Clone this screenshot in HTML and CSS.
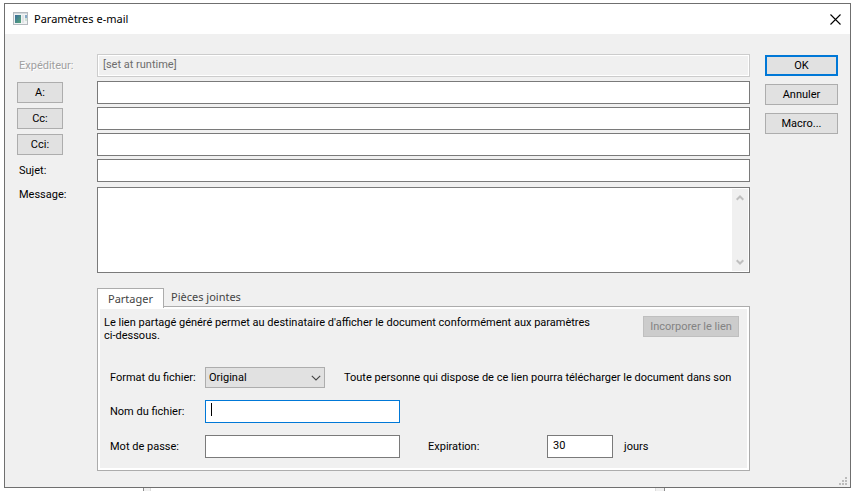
FILE: index.html
```html
<!DOCTYPE html>
<html lang="fr">
<head>
<meta charset="utf-8">
<title>Paramètres e-mail</title>
<link rel="stylesheet" href="styles.css">
</head>
<body>
<main class="dialog">
  <header class="titlebar">
    <svg class="app-icon" width="15" height="14" viewBox="0 0 15 14" aria-hidden="true">
      <defs><linearGradient id="pane" x1="0" y1="0" x2="1" y2="1"><stop offset="0" stop-color="#3a6c9c"/><stop offset="1" stop-color="#56a878"/></linearGradient></defs>
      <rect x="0.5" y="0.5" width="14" height="12" fill="#f1f3f4" stroke="#b4babf"/>
      <rect x="1" y="1" width="13" height="1" fill="#d3d9de"/>
      <rect x="2" y="3" width="6" height="8" fill="url(#pane)"/>
      <rect x="9" y="3" width="2" height="8" fill="#e0e3e5"/>
      <rect x="12" y="3" width="2" height="3" fill="#86a9c8"/>
      <rect x="12" y="6" width="2" height="3" fill="#cfe3d8"/>
    </svg>
    <h1>Paramètres e-mail</h1>
    <button class="close" type="button" aria-label="Fermer">
      <svg width="11" height="11" viewBox="0 0 11 11" aria-hidden="true"><path d="M0.5 0.5L10.5 10.5M10.5 0.5L0.5 10.5" stroke="#000" stroke-width="1.1" fill="none"/></svg>
    </button>
  </header>
  <form class="content">
    <div class="main">
      <div class="row disabled">
        <label class="caption" for="from">Expéditeur:</label>
        <input class="field" id="from" type="text" value="[set at runtime]" disabled>
      </div>
      <div class="row">
        <button class="btn pick" type="button">A:</button>
        <input class="field" type="text" aria-label="A">
      </div>
      <div class="row">
        <button class="btn pick" type="button">Cc:</button>
        <input class="field" type="text" aria-label="Cc">
      </div>
      <div class="row">
        <button class="btn pick" type="button">Cci:</button>
        <input class="field" type="text" aria-label="Cci">
      </div>
      <div class="row">
        <label class="caption" for="subject">Sujet:</label>
        <input class="field" id="subject" type="text">
      </div>
      <div class="row message">
        <label class="caption" for="message">Message:</label>
        <div class="memo">
          <textarea id="message"></textarea>
          <div class="scrollbar" aria-hidden="true">
            <svg width="8" height="6" viewBox="0 0 8 6"><path d="M0.7 4.8L4 1.5L7.3 4.8" fill="none" stroke="#bfbfbf" stroke-width="2"/></svg>
            <svg width="8" height="6" viewBox="0 0 8 6"><path d="M0.7 1.2L4 4.5L7.3 1.2" fill="none" stroke="#bfbfbf" stroke-width="2"/></svg>
          </div>
        </div>
      </div>
      <section class="tabs">
        <div class="tablist" role="tablist">
          <button class="tab active" type="button" role="tab" aria-selected="true">Partager</button>
          <button class="tab" type="button" role="tab" aria-selected="false">Pièces jointes</button>
        </div>
        <div class="panel" role="tabpanel">
          <div class="intro">
            <p>Le lien partagé généré permet au destinataire d'afficher le document conformément aux paramètres ci-dessous.</p>
            <button class="btn embed" type="button" disabled>Incorporer le lien</button>
          </div>
          <div class="settings">
            <div class="setting">
              <label for="format">Format du fichier:</label>
              <div class="picker">
                <select id="format"><option>Original</option></select>
                <svg width="10" height="6" viewBox="0 0 10 6" aria-hidden="true"><path d="M0.8 0.8L5 5L9.2 0.8" fill="none" stroke="#444" stroke-width="1.1"/></svg>
              </div>
              <span class="note">Toute personne qui dispose de ce lien pourra télécharger le document dans son</span>
            </div>
            <div class="setting">
              <label for="filename">Nom du fichier:</label>
              <input class="field medium focused" id="filename" type="text">
            </div>
            <div class="setting">
              <label for="password">Mot de passe:</label>
              <input class="field medium" id="password" type="password">
              <label class="expiry" for="days">Expiration:</label>
              <input class="field small" id="days" type="text" value="30">
              <span class="unit">jours</span>
            </div>
          </div>
        </div>
      </section>
    </div>
    <div class="actions">
      <button class="btn default" type="button">OK</button>
      <button class="btn" type="button">Annuler</button>
      <button class="btn" type="button">Macro...</button>
    </div>
  </form>
  <svg class="grip" width="8" height="8" viewBox="0 0 8 8" aria-hidden="true"><path d="M6 0h2v2h-2zM3 3h2v2h-2zM6 3h2v2h-2zM0 6h2v2h-2zM3 6h2v2h-2zM6 6h2v2h-2z" fill="#bcbcbc"/></svg>
</main>
<footer class="behind"><span class="edge-left"></span><span class="edge-right"></span></footer>
</body>
</html>
```
FILE: styles.css
```css
* { box-sizing: border-box; }

body {
  margin: 0;
  min-height: 100vh;
  display: flex;
  flex-direction: column;
  padding: 3px 2px 0 4px;
  background: #fff;
  color: #000;
  font: 11px/13px Roboto, "Liberation Sans", sans-serif;
}

button, input, select, textarea { font: inherit; color: inherit; margin: 0; }

.dialog {
  position: relative;
  flex: 1;
  border: 1px solid #6f6f6f;
  background: #f0f0f0;
}

.titlebar {
  display: flex;
  align-items: center;
  height: 30px;
  padding: 0 9px 0 8px;
  background: #fff;
}
.titlebar h1 {
  flex: 1;
  margin: 0 0 0 6px;
  font: 11px/16px "Noto Sans", sans-serif;
}
.close { display: flex; padding: 0; border: 0; background: none; }

.content { display: flex; gap: 15px; padding: 20px 12px 16px; }
.main { flex: 1; min-width: 0; }

.row { display: flex; align-items: center; margin-bottom: 3px; }
.row.disabled { margin-bottom: 4px; }
.caption { width: 78px; margin-left: 2px; flex: none; }
.disabled .caption { color: #a0a0a0; text-shadow: 1px 1px #fff; }

.btn {
  height: 21px;
  padding: 0;
  border: 1px solid #adadad;
  background: #e1e1e1;
}
.pick { width: 46px; margin-right: 34px; flex: none; }

.field {
  flex: 1;
  min-width: 0;
  height: 23px;
  padding: 0 5px 3px;
  border: 1px solid #7a7a7a;
  border-radius: 0;
  background: #fff;
}
.field:disabled {
  border-color: #ccc;
  background: #f0f0f0;
  color: #6d6d6d;
  box-shadow: inset 0 0 0 1px #fff;
}
.medium { flex: none; width: 195px; }
.small { flex: none; width: 66px; }
.focused {
  border-color: #0078d7;
  background: linear-gradient(#000, #000) 5px 2px / 1px 13px no-repeat #fff;
}

.message { align-items: stretch; margin: 5px 0 15px; }
.message .caption { padding-top: 1px; }
.memo { position: relative; flex: 1; display: flex; }
.memo textarea {
  flex: 1;
  height: 86px;
  padding: 3px 22px 3px 5px;
  border: 1px solid #7a7a7a;
  resize: none;
  overflow: hidden;
  background: #fff;
}
.scrollbar {
  position: absolute;
  top: 2px;
  right: 2px;
  bottom: 2px;
  width: 16px;
  padding: 6px 4px;
  display: flex;
  flex-direction: column;
  justify-content: space-between;
  background: #f0f0f0;
}

.tabs { margin-left: 80px; }
.tablist { display: flex; height: 18px; }
.tab {
  height: 18px;
  padding: 0 7px;
  border: 0;
  background: none;
  color: #444;
  font: 11px/16px "Noto Sans", sans-serif;
}
.tab.active {
  position: relative;
  width: 67px;
  height: 20px;
  border: 1px solid #acacac;
  border-bottom: 0;
  background: #fff;
}
.panel {
  padding: 9px 10px 12px 6px;
  border: 1px solid #acacac;
  box-shadow: inset 0 0 0 2px #fff;
}
.intro { display: flex; justify-content: space-between; align-items: flex-start; margin-bottom: 25px; }
.intro p { margin: 0; max-width: 490px; }
.embed { flex: none; width: 96px; }
.embed:disabled { border-color: #bfbfbf; background: #ccc; color: #838383; }

.settings { display: flex; flex-direction: column; gap: 12px; padding-left: 6px; }
.setting { display: flex; align-items: center; white-space: nowrap; }
.setting label { width: 95px; flex: none; }
.picker { position: relative; flex: none; width: 120px; }
.picker select {
  display: block;
  width: 100%;
  height: 21px;
  padding: 0 3px;
  border: 1px solid #adadad;
  border-radius: 0;
  background: #e1e1e1;
  appearance: none;
}
.picker svg { position: absolute; right: 4px; top: 8px; pointer-events: none; }
.note { margin-left: 19px; }
.setting .expiry { width: 119px; margin-left: 28px; }
.unit { margin-left: 11px; }

.actions { flex: none; width: 73px; padding-top: 1px; display: flex; flex-direction: column; gap: 8px; }
.default { border: 2px solid #0078d7; }

.grip { position: absolute; right: 3px; bottom: 2px; }

.behind { display: flex; justify-content: space-between; height: 3px; padding: 0 186px 0 139px; }
.behind span { border: solid #dcdcdc; border-width: 0 1px; background: #f0f0f0; }
.behind .edge-left { width: 8px; border-left-color: #8c8c8c; }
.behind .edge-right { width: 10px; border-right-color: #8c8c8c; }
```
